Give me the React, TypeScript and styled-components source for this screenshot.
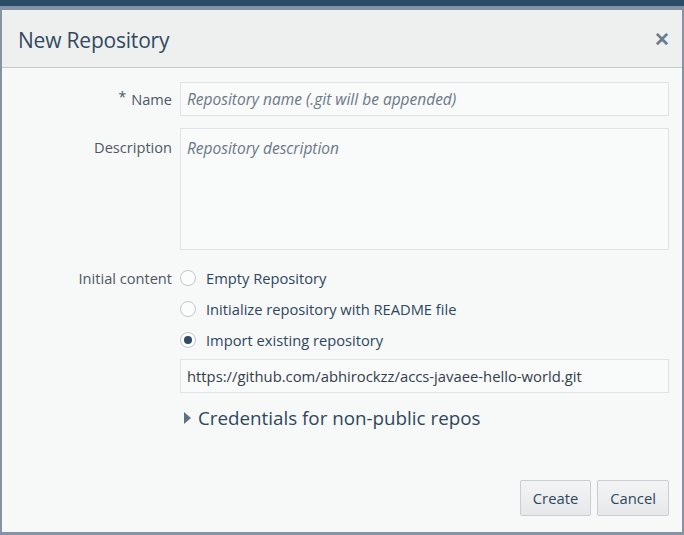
import React from "react";
import styled, { createGlobalStyle } from "styled-components";

const Global = createGlobalStyle`
  html, body { margin: 0; padding: 0; }
  body {
    width: 684px; height: 535px; overflow: hidden;
    background: #2c4d68;
    font-family: "Open Sans", "Noto Sans", sans-serif;
  }
`;

const Page = styled.div`
  width: 684px;
  height: 535px;
  box-sizing: border-box;
  padding: 6px 0 0 0;
  background: #2c4d68;
  display: flex;
`;

const Frame = styled.div`
  flex: 1;
  background: #8494a6;
  padding: 4px 2px 3px 2px;
  display: flex;
`;

const Dialog = styled.div`
  flex: 1;
  display: flex;
  flex-direction: column;
  background: #f7f9f9;
`;

const Header = styled.div`
  height: 58px;
  box-sizing: border-box;
  display: flex;
  align-items: center;
  justify-content: space-between;
  padding: 2px 12px 0 16px;
  background: #eef0f0;
  border-bottom: 1px solid #c3c8cc;
`;

const Title = styled.h1`
  margin: 0;
  font-size: 21px;
  font-weight: 400;
  color: #33495e;
  letter-spacing: -0.2px;
`;

const Close = styled.span`
  font-size: 19px;
  font-weight: 700;
  color: #6b7c8e;
  line-height: 1;
`;

const Body = styled.div`
  flex: 1;
  padding: 14px 13px 16px 0;
  display: flex;
  flex-direction: column;
`;

const Row = styled.div<{ $mt?: number }>`
  display: grid;
  grid-template-columns: 170px 1fr;
  column-gap: 8px;
  margin-top: ${(p) => p.$mt ?? 0}px;
`;

const Label = styled.div<{ $pt: number }>`
  text-align: right;
  font-size: 14.6px;
  color: #4d5864;
  padding-top: ${(p) => p.$pt}px;
`;

const Star = styled.span`
  font-size: 14px;
  margin-right: 5px;
  position: relative;
  top: -3px;
`;

const Field = styled.div<{ $h: number; $italic?: boolean }>`
  height: ${(p) => p.$h}px;
  box-sizing: border-box;
  border: 1px solid #dfe3e6;
  background: #f9fafa;
  padding: ${(p) => (p.$h > 40 ? "8px" : "0")} 6px 0 6px;
  display: flex;
  align-items: ${(p) => (p.$h > 40 ? "flex-start" : "center")};
  font-size: ${(p) => (p.$italic ? "15.5px" : "14.8px")};
  font-style: ${(p) => (p.$italic ? "italic" : "normal")};
  color: ${(p) => (p.$italic ? "#6b7887" : "#33404c")};
`;

const Options = styled.div`
  display: flex;
  flex-direction: column;
  gap: 11px;
`;

const Option = styled.label`
  display: flex;
  align-items: center;
  gap: 10px;
  font-size: 14.7px;
  color: #2e475d;
  height: 20px;
`;

const Radio = styled.span<{ $on?: boolean }>`
  width: 16px;
  height: 16px;
  border-radius: 50%;
  box-sizing: border-box;
  border: 1px solid #c2c8cd;
  background: #fbfcfc;
  display: flex;
  align-items: center;
  justify-content: center;
  &::after {
    content: "";
    display: ${(p) => (p.$on ? "block" : "none")};
    width: 8px;
    height: 8px;
    border-radius: 50%;
    background: #2f4a63;
  }
`;

const UrlWrap = styled.div`
  margin-top: 9px;
`;

const Disclosure = styled.div`
  display: flex;
  align-items: center;
  gap: 7px;
  font-size: 18.8px;
  color: #2e475d;
  margin-top: 12px;
  padding-left: 4px;
`;

const Tri = styled.span`
  width: 0;
  height: 0;
  border-top: 6px solid transparent;
  border-bottom: 6px solid transparent;
  border-left: 7px solid #5e7183;
`;

const Footer = styled.div`
  margin-top: auto;
  display: flex;
  justify-content: flex-end;
  gap: 6px;
`;

const Button = styled.button`
  height: 36px;
  padding: 0 12px;
  font-family: inherit;
  font-size: 14.8px;
  color: #2e475d;
  background: linear-gradient(#f3f4f5, #e6e8ea);
  border: 1px solid #c9ced2;
  border-radius: 2px;
`;

export default function App() {
  return (
    <Page>
      <Global />
      <Frame>
        <Dialog>
          <Header>
            <Title>New Repository</Title>
            <Close>✕</Close>
          </Header>
          <Body>
            <Row>
              <Label $pt={7}>
                <Star>*</Star>Name
              </Label>
              <Field $h={34} $italic>
                Repository name (.git will be appended)
              </Field>
            </Row>
            <Row $mt={12}>
              <Label $pt={9}>Description</Label>
              <Field $h={122} $italic>
                Repository description
              </Field>
            </Row>
            <Row $mt={18}>
              <Label $pt={0}>Initial content</Label>
              <div>
                <Options>
                  <Option>
                    <Radio />
                    Empty Repository
                  </Option>
                  <Option>
                    <Radio />
                    Initialize repository with README file
                  </Option>
                  <Option>
                    <Radio $on />
                    Import existing repository
                  </Option>
                </Options>
                <UrlWrap>
                  <Field $h={34}>https://github.com/abhirockzz/accs-javaee-hello-world.git</Field>
                </UrlWrap>
                <Disclosure>
                  <Tri />
                  Credentials for non-public repos
                </Disclosure>
              </div>
            </Row>
            <Footer>
              <Button>Create</Button>
              <Button>Cancel</Button>
            </Footer>
          </Body>
        </Dialog>
      </Frame>
    </Page>
  );
}
